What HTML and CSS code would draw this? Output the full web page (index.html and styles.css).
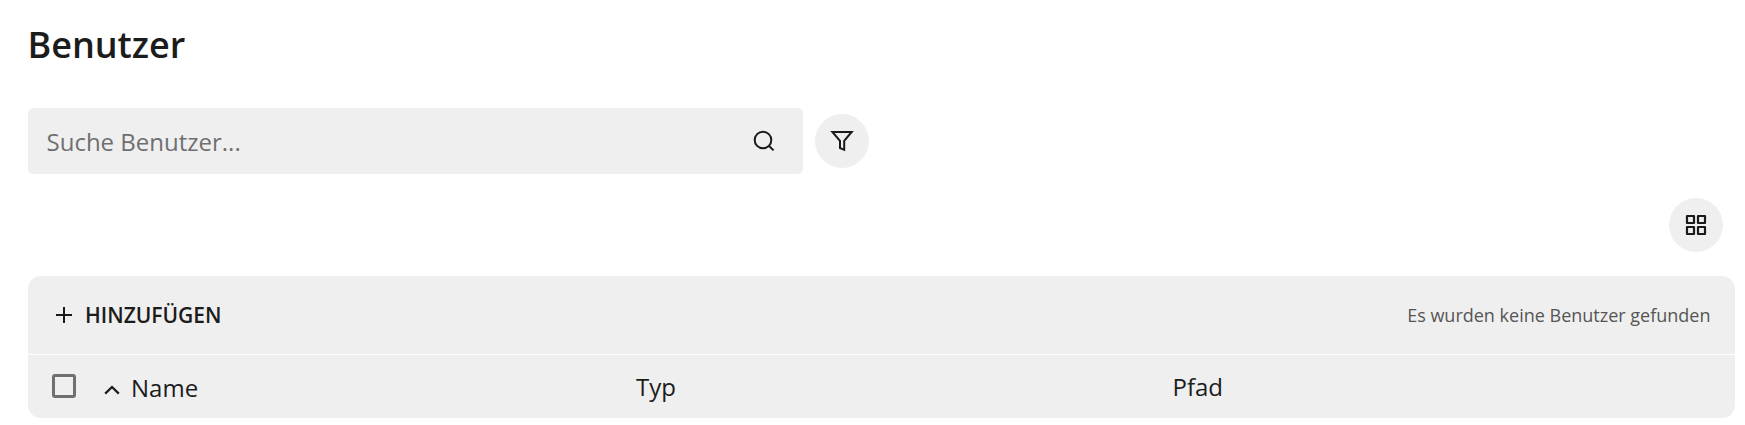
FILE: index.html
```html
<!DOCTYPE html>
<html lang="de">
<head>
<meta charset="utf-8">
<title>Benutzer</title>
<link rel="stylesheet" href="styles.css">
</head>
<body>
<main class="page">
  <h1 class="title">Benutzer</h1>
  <div class="search-row">
    <div class="search">
      <span class="search-text">Suche Benutzer...</span>
      <svg class="icon" viewBox="0 0 24 24"><circle cx="11" cy="11" r="8.3"/><path d="M17 17l4.6 4.4"/></svg>
    </div>
    <button class="round" aria-label="Filter">
      <svg class="icon" viewBox="0 0 24 24"><path d="M2.4 3h19.3l-7.5 8.9v8.9l-4.2-1.8v-7.1z"/></svg>
    </button>
  </div>
  <div class="view-row">
    <button class="round" aria-label="Kacheln">
      <svg class="icon grid" viewBox="0 0 24 24"><path d="M3 3h7v7H3zM14 3h7v7h-7zM3 14h7v7H3zM14 14h7v7h-7z"/></svg>
    </button>
  </div>
  <section class="card">
    <div class="toolbar">
      <button class="add"><svg class="plus" viewBox="0 0 18 18"><path d="M9 1v16M1 9h16"/></svg><span>HINZUFÜGEN</span></button>
      <span class="status">Es wurden keine Benutzer gefunden</span>
    </div>
    <div class="head">
      <span class="check"></span>
      <span class="name"><svg class="caret" viewBox="0 0 16 10"><path d="M1.2 8.6L8 2l6.8 6.6"/></svg><span>Name</span></span>
      <span class="col-type">Typ</span>
      <span class="col-path">Pfad</span>
    </div>
  </section>
</main>
</body>
</html>
```
FILE: styles.css
```css
* { box-sizing: border-box; }
body { margin: 0; background: #fff; color: #1c1c1c; font-family: "Open Sans", "Noto Sans", sans-serif; overflow: hidden; }
button { border: 0; padding: 0; background: none; color: inherit; font: inherit; }
svg { fill: none; stroke: #1a1a1a; display: block; flex: none; }
.page { padding: 20px 10px 0 28px; }
.title { margin: 0 0 0 -0.6px; height: 88px; font-size: 36px; line-height: 50px; font-weight: 600; }
.search-row { display: flex; align-items: center; gap: 12px; height: 66px; }
.search { width: 775px; height: 66px; border-radius: 5px; background: #efefef; display: flex; align-items: center; justify-content: space-between; padding: 0 27px 0 18.5px; }
.search-text { font-size: 24px; line-height: 34px; color: #6f6f6f; padding-top: 2px; }
.icon { width: 24px; height: 24px; stroke-width: 2; }
.grid { stroke-width: 2.2; stroke-linejoin: round; }
.round { width: 54px; height: 54px; border-radius: 50%; background: #efefef; display: flex; align-items: center; justify-content: center; }
.view-row { display: flex; justify-content: flex-end; padding: 24px 12px 24px 0; }
.card { height: 142px; border-radius: 13px; background: #efefef; overflow: hidden; }
.toolbar { height: 79px; border-bottom: 1px solid #fff; display: flex; align-items: center; justify-content: space-between; padding: 0 24.5px 0 27px; }
.add { display: flex; align-items: center; gap: 12px; font-size: 21px; font-weight: 600; line-height: 30px; }
.plus { width: 18px; height: 18px; stroke-width: 2; }
.status { font-size: 18px; line-height: 26px; color: #555; }
.head { height: 63px; display: grid; grid-template-columns: 52px 532px 536.5px 1fr; align-items: center; padding-left: 24px; font-size: 24px; line-height: 34px; }
.check { width: 24px; height: 24px; margin-bottom: 2px; border: 3px solid #707070; border-radius: 3px; }
.name { display: flex; align-items: center; gap: 11px; padding-top: 2px; }
.caret { width: 16px; height: 10px; margin-top: 4px; stroke-width: 2.2; }
```
